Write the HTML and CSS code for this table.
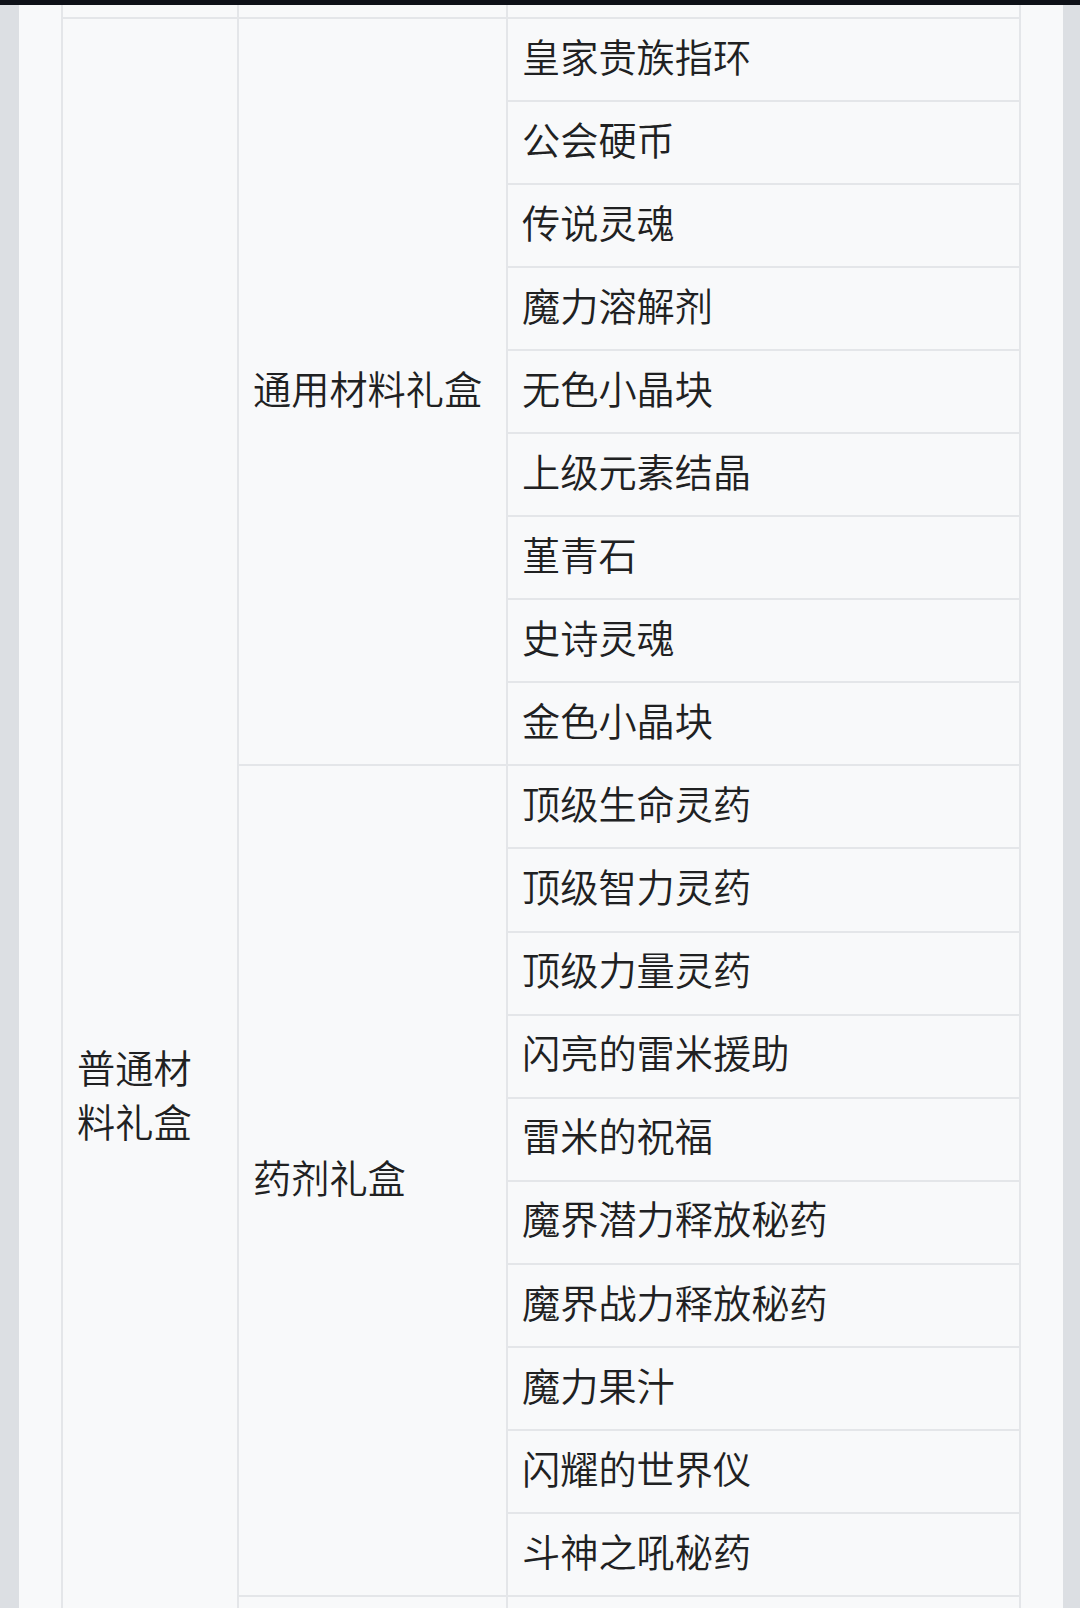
FILE: index.html
```html
<!DOCTYPE html>
<html lang="zh-CN">
<head>
<meta charset="utf-8">
<title>礼盒</title>
<link rel="stylesheet" href="styles.css">
</head>
<body>
<div class="topbar"></div>
<div class="page">
  <div class="content">
    <table class="gift">
      <colgroup>
        <col class="c1"><col class="c2"><col class="c3">
      </colgroup>
      <tbody>
        <tr class="prev"><td></td><td></td><td></td></tr>
        <tr><td rowspan="26" class="cat">普通材料礼盒</td><td rowspan="9" class="box">通用材料礼盒</td><td>皇家贵族指环</td></tr>
        <tr><td>公会硬币</td></tr>
        <tr><td>传说灵魂</td></tr>
        <tr><td>魔力溶解剂</td></tr>
        <tr><td>无色小晶块</td></tr>
        <tr><td>上级元素结晶</td></tr>
        <tr><td>堇青石</td></tr>
        <tr><td>史诗灵魂</td></tr>
        <tr><td>金色小晶块</td></tr>
        <tr><td rowspan="10" class="box">药剂礼盒</td><td>顶级生命灵药</td></tr>
        <tr><td>顶级智力灵药</td></tr>
        <tr><td>顶级力量灵药</td></tr>
        <tr><td>闪亮的雷米援助</td></tr>
        <tr><td>雷米的祝福</td></tr>
        <tr><td>魔界潜力释放秘药</td></tr>
        <tr><td>魔界战力释放秘药</td></tr>
        <tr><td>魔力果汁</td></tr>
        <tr><td>闪耀的世界仪</td></tr>
        <tr><td>斗神之吼秘药</td></tr>
        <tr><td rowspan="7" class="box"></td><td></td></tr>
        <tr><td></td></tr>
        <tr><td></td></tr>
        <tr><td></td></tr>
        <tr><td></td></tr>
        <tr><td></td></tr>
        <tr><td></td></tr>
      </tbody>
    </table>
  </div>
</div>
</body>
</html>
```
FILE: styles.css
```css
html, body {
  margin: 0;
  padding: 0;
}
body {
  background: #dcdfe3;
  font-family: "Noto Sans CJK SC", "Noto Sans", sans-serif;
  font-weight: 350;
  color: #202122;
  overflow: hidden;
}
.topbar {
  height: 5px;
  background: #0e1118;
}
.page {
  padding: 0 17px 0 19px;
}
.content {
  background: #f8f9fa;
  padding: 0 0 0 42px;
  min-height: 2400px;
}
.gift {
  border-collapse: collapse;
  table-layout: fixed;
  width: 958px;
  font-size: 38.2px;
  line-height: 1.425;
}
.c1 { width: 176px; }
.c2 { width: 269px; }
.c3 { width: 513px; }
.gift td {
  border: 2px solid #e4e6e9;
  padding: 0 14px 7px 14px;
  height: 81.05px;
  box-sizing: border-box;
  vertical-align: middle;
  text-align: left;
}
.gift tr {
  height: 83.05px;
}
.gift tr.prev {
  height: 13px;
}
.gift tr.prev td {
  height: 13px;
  padding: 0;
  border-top: 0;
}
.gift td.cat,
.gift td.box {
  height: auto;
}
```
